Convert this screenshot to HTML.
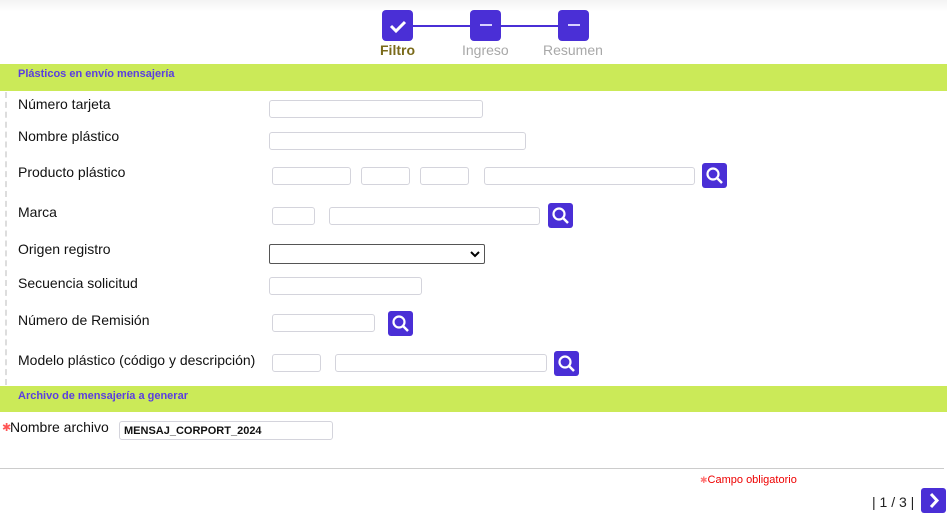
<!DOCTYPE html>
<html><head><meta charset="utf-8"><style>
body{margin:0;width:947px;height:515px;position:relative;background:#fff;font-family:"Liberation Sans",Arial,sans-serif;overflow:hidden}
.a{position:absolute}
.top{left:0;top:0;width:947px;height:12px;background:linear-gradient(#f3f3f3,#fff)}
.step{width:31px;height:31px;background:#4a2fd6;border-radius:4px;top:10px}
.dash{width:12px;height:2px;background:#d8d0ff;left:10px;top:14px}
.lbl{top:42px;font-size:14px;color:#a8a8a8}
.bar{left:0;width:947px;background:#cbea58;color:#5a3ee0;font-weight:bold;font-size:11px}
.bar span{position:absolute;left:18px;top:4px}
.l{left:18px;font-size:14px;color:#111}
.in{border:1px solid #d4d4dc;border-radius:3px;height:18px;background:#fff;box-sizing:border-box}
.s{width:25px;height:25px;background:#4a2fd6;border-radius:3px}
.s svg{position:absolute;left:3px;top:3px}
</style></head><body>
<div class="a top"></div>
<div class="a" style="left:397px;top:25px;width:176px;height:2px;background:#4a2fd6"></div>
<div class="a step" style="left:382px"><svg width="31" height="31"><path d="M9 16l5 5 9-9" stroke="#fff" stroke-width="3" fill="none"/></svg></div>
<div class="a step" style="left:470px"><div class="a dash"></div></div>
<div class="a step" style="left:558px"><div class="a dash"></div></div>
<div class="a lbl" style="left:380px;color:#7a6a1a;font-weight:bold">Filtro</div>
<div class="a lbl" style="left:462px">Ingreso</div>
<div class="a lbl" style="left:543px">Resumen</div>

<div class="a bar" style="top:64px;height:27px"><span>Plásticos en envío mensajería</span></div>
<div class="a" style="left:5px;top:92px;height:293px;border-left:2px dashed #ddd"></div>

<div class="a l" style="top:96px">Número tarjeta</div>
<div class="a in" style="left:269px;top:100px;width:214px"></div>
<div class="a l" style="top:128px">Nombre plástico</div>
<div class="a in" style="left:269px;top:132px;width:257px"></div>
<div class="a l" style="top:164px">Producto plástico</div>
<div class="a in" style="left:272px;top:167px;width:79px"></div>
<div class="a in" style="left:361px;top:167px;width:49px"></div>
<div class="a in" style="left:420px;top:167px;width:49px"></div>
<div class="a in" style="left:484px;top:167px;width:211px"></div>
<div class="a s" style="left:702px;top:163px"><svg width="19" height="19"><circle cx="8" cy="8" r="5.5" stroke="#fff" stroke-width="2.2" fill="none"/><path d="M12 12l5 5" stroke="#fff" stroke-width="2.5"/></svg></div>
<div class="a l" style="top:204px">Marca</div>
<div class="a in" style="left:272px;top:207px;width:43px"></div>
<div class="a in" style="left:329px;top:207px;width:211px"></div>
<div class="a s" style="left:548px;top:203px"><svg width="19" height="19"><circle cx="8" cy="8" r="5.5" stroke="#fff" stroke-width="2.2" fill="none"/><path d="M12 12l5 5" stroke="#fff" stroke-width="2.5"/></svg></div>
<div class="a l" style="top:241px">Origen registro</div>
<div class="a" style="left:269px;top:244px;width:216px;height:20px;border:1px solid #555;border-radius:2px;box-sizing:border-box"><svg class="a" style="right:4px;top:6px" width="10" height="7"><path d="M1 1l4 4 4-4" stroke="#000" stroke-width="2" fill="none"/></svg></div>
<div class="a l" style="top:275px">Secuencia solicitud</div>
<div class="a in" style="left:269px;top:277px;width:153px"></div>
<div class="a l" style="top:312px">Número de Remisión</div>
<div class="a in" style="left:272px;top:314px;width:103px"></div>
<div class="a s" style="left:388px;top:311px"><svg width="19" height="19"><circle cx="8" cy="8" r="5.5" stroke="#fff" stroke-width="2.2" fill="none"/><path d="M12 12l5 5" stroke="#fff" stroke-width="2.5"/></svg></div>
<div class="a l" style="top:352px">Modelo plástico (código y descripción)</div>
<div class="a in" style="left:272px;top:354px;width:49px"></div>
<div class="a in" style="left:335px;top:354px;width:212px"></div>
<div class="a s" style="left:554px;top:351px"><svg width="19" height="19"><circle cx="8" cy="8" r="5.5" stroke="#fff" stroke-width="2.2" fill="none"/><path d="M12 12l5 5" stroke="#fff" stroke-width="2.5"/></svg></div>

<div class="a bar" style="top:386px;height:26px"><span>Archivo de mensajería a generar</span></div>
<div class="a" style="left:2px;top:421px;font-size:11px;color:#f55">✱</div>
<div class="a" style="left:10px;top:419px;font-size:14px;color:#111">Nombre archivo</div>
<div class="a in" style="left:119px;top:421px;width:214px;height:19px;font-size:11px;font-weight:bold;padding:3px 0 0 4px;color:#111">MENSAJ_CORPORT_2024</div>
<div class="a" style="left:0;top:468px;width:944px;height:1px;background:#ccc"></div>
<div class="a" style="left:700px;top:474px;font-size:11px;color:#e00"><span style="color:#f77;font-size:9px">✱</span>Campo obligatorio</div>
<div class="a" style="left:872px;top:494px;font-size:14px;color:#222">| 1 / 3 |</div>
<div class="a" style="left:921px;top:488px;width:25px;height:25px;background:#4a2fd6;border-radius:3px"><svg width="25" height="25"><path d="M10 6l6 6.5-6 6.5" stroke="#fff" stroke-width="3" fill="none"/></svg></div>
</body></html>
